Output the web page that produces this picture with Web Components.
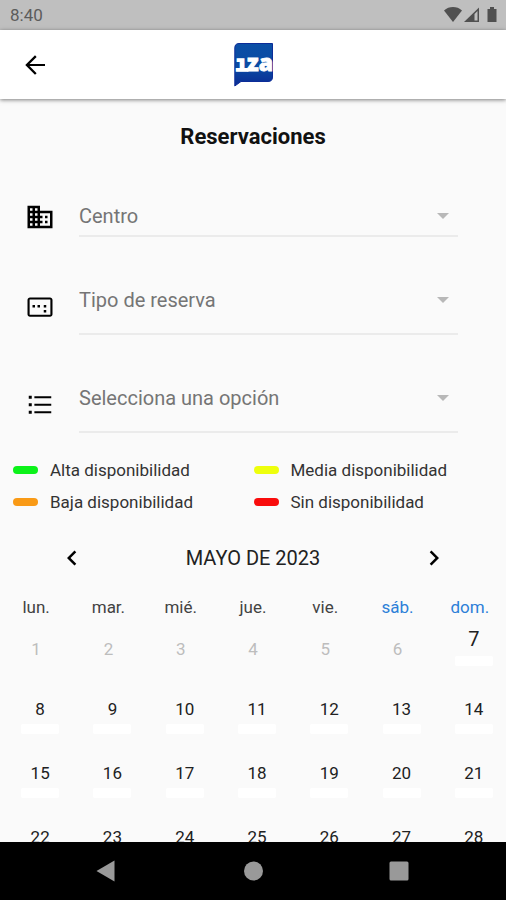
<!DOCTYPE html>
<html lang="es">
<head>
<meta charset="utf-8">
<meta name="viewport" content="width=device-width, initial-scale=1">
<title>Reservaciones</title>
<style>
    body {
        margin: 0;
        background: #fafafa;
        color: #212121;
        font-family: Roboto, "Liberation Sans", sans-serif;
    }
</style>
</head>
<body>
<reserva-app></reserva-app>

<script>
function makeTemplate(html) {
    const template = document.createElement('template');
    template.innerHTML = html;
    return template;
}

// Attaches a shadow root and clones the class' template in it
class BaseElement extends HTMLElement {
    constructor() {
        super();
        const shadow = this.attachShadow({ mode: 'open' });
        shadow.append(this.constructor.template.content.cloneNode(true));
    }
}

class StatusBar extends BaseElement {
    static template = makeTemplate(`
        <style>
            :host {
                display: flex;
                align-items: center;
                justify-content: space-between;
                height: 30px;
                padding: 0 8px 0 10px;
                background: #bfbfbf;
                color: #5c5c5c;
                font-size: 17px;
                line-height: 20px;
            }
            svg { display: block; }
        </style>
        <span><slot></slot></span>
        <svg width="54" height="18" viewBox="0 0 54 18" fill="#505050" aria-hidden="true">
            <path d="M0 4.500C5-.1 13-.1 18 4.500L9 16z"/>
            <path d="M20 16L35 1.500V16z"/>
            <path d="M30.500 8L33.500 5V14.500H30.500z" fill="#bfbfbf"/>
            <path d="M46 1h4v2h2.500v13h-9V3H46z"/>
        </svg>
    `);
}

class IzaLogo extends BaseElement {
    static template = makeTemplate(`
        <style>
            :host { display: block; }
            svg { display: block; }
        </style>
        <svg width="40" height="44" viewBox="0 0 40 44" role="img" aria-label="iza">
            <defs>
                <linearGradient id="g" x1="0" y1="0" x2="0" y2="1">
                    <stop offset="0" stop-color="#0b4fa6"/>
                    <stop offset=".55" stop-color="#0a4ba3"/>
                    <stop offset="1" stop-color="#0a2a94"/>
                </linearGradient>
            </defs>
            <path d="M6 .5H39.500V34Q39.500 38.500 35 38.500H8L1.800 43V5Q1.800 .5 6 .5z" fill="url(#g)" stroke="#0c2c98"/>
            <text y="28" fill="#fff" stroke="#fff">
                <tspan x="2" font-family="DejaVu Sans Mono, monospace" font-weight="700" font-size="22" stroke-width="1.500">ı</tspan><tspan x="14" font-family="Open Sans, sans-serif" font-weight="800" font-size="23" stroke-width=".8">za</tspan>
            </text>
        </svg>
    `);
}

class AppBar extends BaseElement {
    static template = makeTemplate(`
        <style>
            :host {
                display: grid;
                grid-template-columns: 1fr auto 1fr;
                align-items: center;
                height: 69px;
                padding: 0 20px;
                background: #fff;
                box-shadow: 0 1px 4px rgba(0, 0, 0, 0.5);
                box-sizing: border-box;
                z-index: 1;
            }
            button {
                display: block;
                padding: 0;
                border: none;
                background: none;
                color: #000;
                cursor: pointer;
            }
            svg { display: block; }
        </style>
        <button type="button" aria-label="Atrás">
            <svg width="30" height="30" viewBox="0 0 24 24" fill="currentColor">
                <path d="M20 11.200H7.600l5.700-5.700L12 4.200 4.200 12l7.800 7.800 1.300-1.300-5.700-5.700H20z"/>
            </svg>
        </button>
        <slot></slot>
    `);
}

class SelectField extends BaseElement {
    static template = makeTemplate(`
        <style>
            :host { display: block; }
            label {
                display: grid;
                grid-template-columns: 30px 1fr;
                gap: 24px;
                align-items: center;
            }
            .box {
                display: grid;
                align-items: center;
                border-bottom: 2px solid #ebebeb;
                padding-bottom: var(--field-space, 0);
            }
            select, .arrow { grid-area: 1 / 1; }
            select {
                width: 100%;
                height: 38px;
                margin: 0;
                padding: 0 40px 0 0;
                border: none;
                border-radius: 0;
                background: none;
                appearance: none;
                color: #757575;
                font: inherit;
                font-size: 20px;
            }
            .arrow {
                justify-self: end;
                margin-right: 9px;
                border: 6px solid transparent;
                border-top-color: #b8b8b8;
                border-bottom: none;
                pointer-events: none;
            }
            ::slotted(svg) { display: block; width: 30px; height: 30px; }
        </style>
        <label>
            <slot></slot>
            <span class="box">
                <select><option></option></select>
                <span class="arrow"></span>
            </span>
        </label>
    `);

    connectedCallback() {
        const name = this.getAttribute('name');
        const select = this.shadowRoot.querySelector('select');
        select.setAttribute('aria-label', name);
        select.options[0].textContent = name;
    }
}

class LegendItem extends BaseElement {
    static template = makeTemplate(`
        <style>
            :host {
                display: flex;
                align-items: center;
                gap: 12px;
                font-size: 17px;
                line-height: 20px;
                color: #333;
            }
            i {
                width: 25px;
                height: 8px;
                border-radius: 4px;
                background: var(--mark);
            }
        </style>
        <i></i><span><slot></slot></span>
    `);
}

class MonthCalendar extends BaseElement {
    static template = makeTemplate(`
        <style>
            :host { display: block; }
            header {
                display: grid;
                grid-template-columns: 2fr 3fr 2fr;
                align-items: center;
                justify-items: center;
                height: 40px;
                margin-bottom: 19px;
            }
            h2 {
                margin: 0;
                font-size: 20px;
                font-weight: 400;
                line-height: 24px;
                white-space: nowrap;
            }
            button {
                display: block;
                padding: 0;
                border: none;
                background: none;
                color: inherit;
                font: inherit;
                cursor: pointer;
            }
            header svg { display: block; color: #000; }
            table {
                width: 100%;
                table-layout: fixed;
                border-collapse: collapse;
                font-size: 17px;
                line-height: 20px;
            }
            th, td { padding: 0; }
            th {
                height: 20px;
                font-weight: 400;
                color: #424242;
            }
            th.weekend { color: #2c7fd8; }
            td {
                height: 64px;
                vertical-align: top;
            }
            td button {
                display: grid;
                justify-items: center;
                align-content: start;
                gap: 5px;
                width: 100%;
                height: 64px;
                padding: 18px 0 0 8px;
            }
            td button::after {
                content: "";
                width: 38px;
                height: 10px;
                border-radius: 2px;
                background: #fff;
            }
            td button:disabled {
                padding: 22px 0 0;
                color: #bdbdbd;
            }
            td button:disabled::after { display: none; }
            td button.selected {
                padding-top: 10px;
                font-size: 20px;
                line-height: 24px;
            }
        </style>
        <header>
            <button type="button" aria-label="Mes anterior">
                <svg width="30" height="30" viewBox="0 0 24 24" fill="currentColor"><path d="M15.410 7.410L14 6l-6 6 6 6 1.410-1.410L10.830 12z"/></svg>
            </button>
            <h2><slot></slot></h2>
            <button type="button" aria-label="Mes siguiente">
                <svg width="30" height="30" viewBox="0 0 24 24" fill="currentColor"><path d="M10 6L8.590 7.410 13.170 12l-4.580 4.590L10 18l6-6z"/></svg>
            </button>
        </header>
        <table>
            <thead><tr></tr></thead>
            <tbody></tbody>
        </table>
    `);

    connectedCallback() {
        const weeks = Number(this.getAttribute('weeks'));
        const today = Number(this.getAttribute('today'));
        const head = this.shadowRoot.querySelector('thead tr');
        const body = this.shadowRoot.querySelector('tbody');

        ['lun.', 'mar.', 'mié.', 'jue.', 'vie.', 'sáb.', 'dom.'].forEach((name, i) => {
            const th = document.createElement('th');
            th.scope = 'col';
            th.textContent = name;
            th.classList.toggle('weekend', i > 4);
            head.appendChild(th);
        });

        let row;
        for (let day = 1; day <= weeks * 7; day++) {
            if (day % 7 === 1) row = body.insertRow();
            const button = document.createElement('button');
            const number = document.createElement('span');
            button.type = 'button';
            button.disabled = day < today;
            button.classList.toggle('selected', day === today);
            number.textContent = day;
            button.appendChild(number);
            row.insertCell().appendChild(button);
        }
    }
}

class NavBar extends BaseElement {
    static template = makeTemplate(`
        <style>
            :host {
                display: flex;
                align-items: center;
                justify-content: center;
                gap: 116px;
                height: 58px;
                background: #000;
                z-index: 1;
            }
            button {
                padding: 0;
                border: none;
                background: none;
                cursor: pointer;
            }
            svg { display: block; fill: #999; }
        </style>
        <button type="button" aria-label="Volver"><svg width="30" height="24"><path d="M4.500 12L22.500 1.500V22.500z"/></svg></button>
        <button type="button" aria-label="Inicio"><svg width="30" height="24"><circle cx="15.500" cy="12" r="9.500"/></svg></button>
        <button type="button" aria-label="Recientes"><svg width="30" height="24"><rect x="5.500" y="2.500" width="19" height="19" rx="1.500"/></svg></button>
    `);
}

class ReservaApp extends BaseElement {
    static template = makeTemplate(`
        <style>
            :host {
                display: flex;
                flex-direction: column;
                height: 100vh;
            }
            status-bar, app-bar, nav-bar { flex: none; }
            main {
                flex: 1;
                min-height: 0;
                overflow: hidden;
            }
            h1 {
                margin: 24px 0 46px;
                color: #111;
                font-size: 22px;
                font-weight: 700;
                line-height: 28px;
                text-align: center;
            }
            form {
                display: grid;
                gap: 44px;
                padding: 0 48px 0 25px;
            }
            .tall { --field-space: 14px; }
            .legend {
                display: grid;
                grid-template-columns: 1fr 1fr;
                gap: 12px 0;
                padding: 27px 12px 26px 13px;
            }
        </style>
        <status-bar>8:40</status-bar>
        <app-bar><iza-logo></iza-logo></app-bar>
        <main>
            <h1>Reservaciones</h1>
            <form>
                <select-field name="Centro">
                    <svg viewBox="0 0 24 24"><path d="M12 7V3H2v18h20V7H12zM6 19H4v-2h2v2zm0-4H4v-2h2v2zm0-4H4V9h2v2zm0-4H4V5h2v2zm4 12H8v-2h2v2zm0-4H8v-2h2v2zm0-4H8V9h2v2zm0-4H8V5h2v2zm10 12h-8v-2h2v-2h-2v-2h2v-2h-2V9h8v10zm-2-8h-2v2h2v-2zm0 4h-2v2h2v-2z"/></svg>
                </select-field>
                <select-field name="Tipo de reserva" class="tall">
                    <svg viewBox="0 0 24 24"><path d="M20 3.500H4c-1.100 0-2 .9-2 2v11.500c0 1.100.9 2 2 2h16c1.100 0 2-.9 2-2V5.500c0-1.100-.9-2-2-2zm.3 13.800H3.700V5.200h16.600v12.100zM6 9.500h2v2H6zm4 0h2v2h-2zm5 0h2v2h-2zm0 4h2v2h-2z"/></svg>
                </select-field>
                <select-field name="Selecciona una opción" class="tall">
                    <svg viewBox="0 0 24 24"><path d="M3 3.800h2.400v2.400H3zM3 9.800h2.400v2.400H3zM3 15.800h2.400v2.400H3zM7.500 4.200H21v1.600H7.500zM7.500 10.200H21v1.600H7.500zM7.500 16.200H21v1.600H7.500z"/></svg>
                </select-field>
            </form>
            <div class="legend">
                <legend-item style="--mark: #0cf21a">Alta disponibilidad</legend-item>
                <legend-item style="--mark: #eeff0c">Media disponibilidad</legend-item>
                <legend-item style="--mark: #f99a16">Baja disponibilidad</legend-item>
                <legend-item style="--mark: #f90c0c">Sin disponibilidad</legend-item>
            </div>
            <month-calendar weeks="4" today="7">MAYO DE 2023</month-calendar>
        </main>
        <nav-bar></nav-bar>
    `);
}

customElements.define('status-bar', StatusBar);
customElements.define('iza-logo', IzaLogo);
customElements.define('app-bar', AppBar);
customElements.define('select-field', SelectField);
customElements.define('legend-item', LegendItem);
customElements.define('month-calendar', MonthCalendar);
customElements.define('nav-bar', NavBar);
customElements.define('reserva-app', ReservaApp);
</script>
</body>
</html>
